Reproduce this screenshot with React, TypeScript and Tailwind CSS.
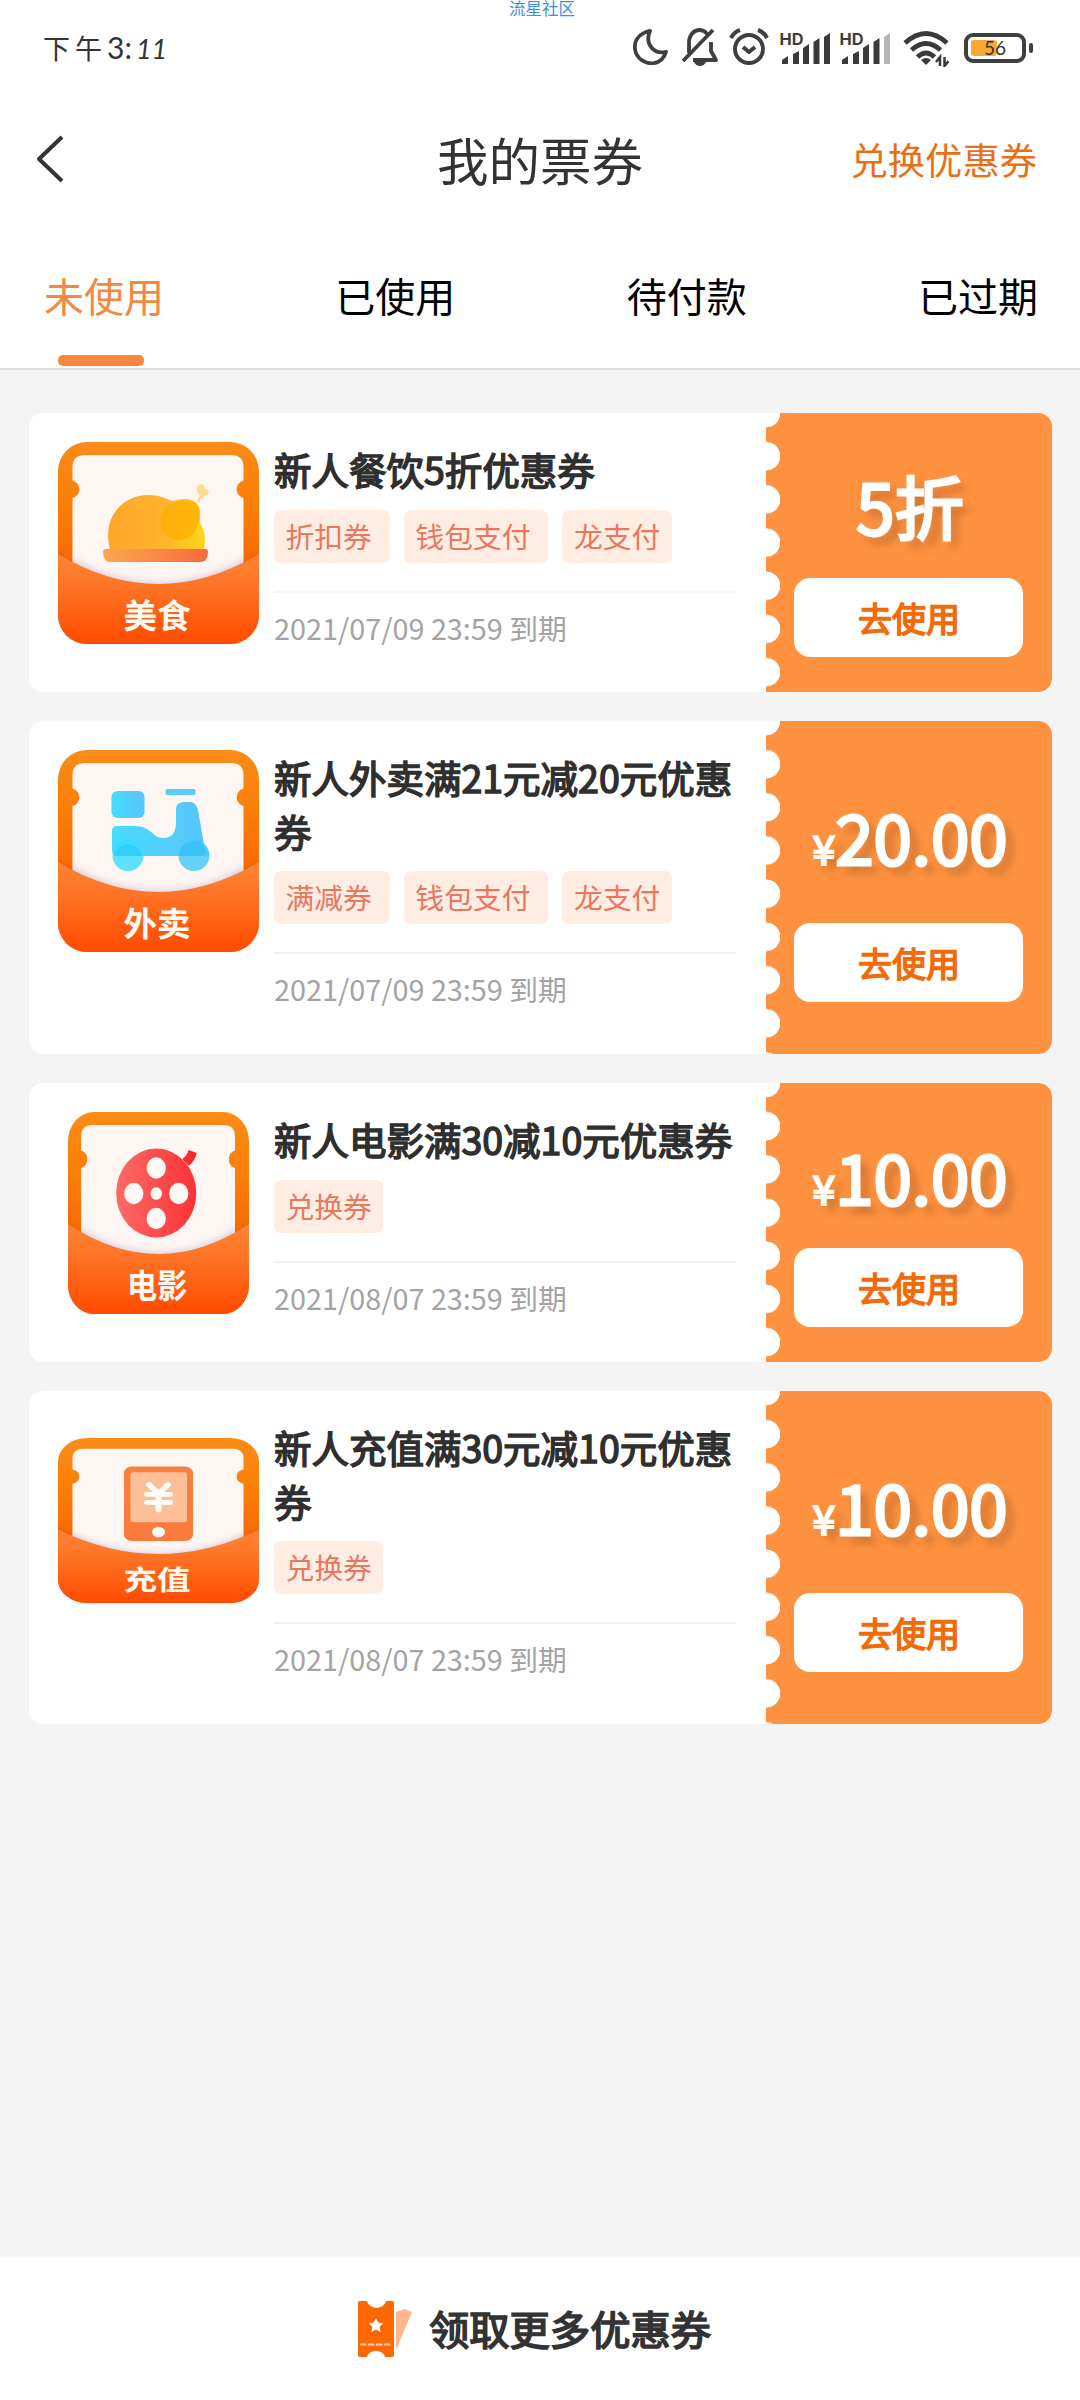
import type { ReactNode } from 'react';
import clsx from 'clsx';

type Category = 'food' | 'delivery' | 'movie' | 'topup';

interface Coupon {
  id: number;
  category: Category;
  label: string;
  title: string;
  tags: string[];
  expires: string;
  amount: string;
  currency?: boolean;
  tall?: boolean;
}

const tabs = ['未使用', '已使用', '待付款', '已过期'];

const coupons: Coupon[] = [
  {
    id: 1,
    category: 'food',
    label: '美食',
    title: '新人餐饮5折优惠券',
    tags: ['折扣券 ', '钱包支付 ', '龙支付'],
    expires: '2021/07/09 23:59 到期',
    amount: '5折',
  },
  {
    id: 2,
    category: 'delivery',
    label: '外卖',
    title: '新人外卖满21元减20元优惠券',
    tags: ['满减券 ', '钱包支付 ', '龙支付'],
    expires: '2021/07/09 23:59 到期',
    amount: '20.00',
    currency: true,
    tall: true,
  },
  {
    id: 3,
    category: 'movie',
    label: '电影',
    title: '新人电影满30减10元优惠券',
    tags: ['兑换券'],
    expires: '2021/08/07 23:59 到期',
    amount: '10.00',
    currency: true,
  },
  {
    id: 4,
    category: 'topup',
    label: '充值',
    title: '新人充值满30元减10元优惠券',
    tags: ['兑换券'],
    expires: '2021/08/07 23:59 到期',
    amount: '10.00',
    currency: true,
    tall: true,
  },
];

const glyphs: Record<Category, ReactNode> = {
  food: (
    <>
      <path d="M139 59l3-6c-4-3-5-8-1-10s6 1 6 4c4 0 5 4 2 6s-4 1-5 2l-3 6z" fill="#ffdc8c" />
      <path d="M52 107C44 78 62 53 91 53c10 0 17 4 24 6 9-3 20-3 25 4 3 5 1 12 2 18 5 8 6 16 4 26z" fill="url(#chicken)" />
      <path d="M121 98c-24 0-25-34-3-38 9-3 19-2 23 5 3 12-2 33-20 33z" fill="#ffae00" fillOpacity=".75" />
      <path d="M48 107h99q3 0 3 3 0 10-8 10H53q-8 0-8-10 0-3 3-3z" fill="url(#plate)" />
    </>
  ),
  delivery: (
    <>
      <rect x="53.500" y="41" width="33" height="27" rx="6" fill="url(#scooter)" />
      <rect x="107.500" y="39" width="30" height="6" rx="1.5" fill="#58cdfb" />
      <path d="M54 81q0-5 5-5h17c18 0 18 12 29 12 9 0 13-6 13-15V60q0-8 8-8h6q6 0 8 8l7 40q1 6-5 6H60q-6 0-6-6z" fill="url(#scooter)" />
      <circle cx="70" cy="105.500" r="15.500" fill="#35dcff" fillOpacity=".8" />
      <circle cx="136" cy="105.500" r="15.500" fill="#3fc8fa" fillOpacity=".8" />
      <path d="M55.500 106a15 15 0 0 1 29 0zM121 106a15 15 0 0 1 30 0z" fill="#28b4f5" fillOpacity=".35" />
    </>
  ),
  movie: (
    <>
      <path d="M127 47q5-3 7-9l9 3q-2 8-9 13z" fill="#f42c32" />
      <circle cx="98" cy="81" r="44.500" fill="url(#reel)" />
      <g fill="#fff9f6">
        <circle cx="98" cy="56" r="10.700" />
        <circle cx="98" cy="106.500" r="10.700" />
        <circle cx="73" cy="81.500" r="10.700" />
        <circle cx="123" cy="81.500" r="10.700" />
        <circle cx="98" cy="81.500" r="6.300" />
      </g>
    </>
  ),
  topup: (
    <>
      <rect x="66" y="35" width="69" height="91" rx="8" fill="url(#phone)" />
      <rect x="72.500" y="42" width="56.500" height="61" rx="3" fill="#fdbf9a" />
      <path d="M91 57l9.500 11 9.500-11M100.500 68v20M89 69h23M89 79h23" fill="none" stroke="#fffaf5" strokeWidth="6" strokeLinecap="round" />
      <circle cx="100.500" cy="115" r="6.500" fill="#fffaf5" />
    </>
  ),
};

function Gradients() {
  return (
    <svg className="absolute h-0 w-0" aria-hidden="true">
      <defs>
        <linearGradient id="frame" x1="0" y1="0" x2="0" y2="1">
          <stop offset="0" stopColor="#fa8c18" />
          <stop offset=".3" stopColor="#fb7e08" />
          <stop offset=".6" stopColor="#fc6a00" />
        </linearGradient>
        <linearGradient id="pocket" x1="0" y1="0" x2="0" y2="1">
          <stop offset="0" stopColor="#ff8436" />
          <stop offset=".35" stopColor="#ff7426" />
          <stop offset="1" stopColor="#ff4b00" />
        </linearGradient>
        <linearGradient id="chicken" x1="0" y1="0" x2="1" y2="0">
          <stop offset="0" stopColor="#ffa52c" />
          <stop offset=".6" stopColor="#ffb52e" />
          <stop offset="1" stopColor="#ffd51a" />
        </linearGradient>
        <linearGradient id="plate" x1="0" y1="0" x2="1" y2="0">
          <stop offset="0" stopColor="#f9a851" />
          <stop offset="1" stopColor="#f76b3c" />
        </linearGradient>
        <linearGradient id="scooter" x1="0" y1="0" x2="1" y2="0">
          <stop offset="0" stopColor="#46dcfe" />
          <stop offset="1" stopColor="#5ac4fb" />
        </linearGradient>
        <linearGradient id="reel" x1="0" y1="0" x2="1" y2="0">
          <stop offset="0" stopColor="#fd6a66" />
          <stop offset="1" stopColor="#fa3238" />
        </linearGradient>
        <linearGradient id="phone" x1="0" y1="0" x2="0" y2="1">
          <stop offset="0" stopColor="#f5813f" />
          <stop offset="1" stopColor="#fa7a3c" />
        </linearGradient>
        <clipPath id="paper">
          <path d="M14.500 25Q14.500 13 27 13H173Q185.500 13 185.500 25V38.500A9 9 0 0 0 185.500 56V145H14.500V56A9 9 0 0 0 14.500 38.500Z" />
        </clipPath>
        <clipPath id="badge">
          <rect width="201" height="202" rx="29" />
        </clipPath>
        <filter id="soft" x="-20%" y="-50%" width="140%" height="200%">
          <feGaussianBlur stdDeviation="4" />
        </filter>
      </defs>
    </svg>
  );
}

function CategoryBadge({ category, label }: { category: Category; label: string }) {
  return (
    <div className="flex h-[202px] w-[201px] shrink-0 items-center justify-center">
      <svg
        viewBox="0 0 201 202"
        preserveAspectRatio="none"
        className={clsx(
          category === 'movie' ? 'w-[181px]' : 'w-[201px]',
          category === 'topup' ? 'mb-px h-[165px]' : 'h-[202px]',
        )}
      >
        <g clipPath="url(#badge)">
          <rect width="201" height="202" fill="url(#frame)" />
          <path d="M-10 108Q100.500 174 211 108V150H-10Z" fill="#c84400" fillOpacity=".5" filter="url(#soft)" />
          <g clipPath="url(#paper)">
            <rect width="201" height="202" fill="#fef6f2" />
            <path d="M0 110Q100.500 174 201 110V160H0Z" fill="#a99bc4" fillOpacity=".6" filter="url(#soft)" />
          </g>
          {glyphs[category]}
          <path d="M0 112Q100.500 172 201 112V202H0Z" fill="url(#pocket)" />
        </g>
        <text x="99" y="186" textAnchor="middle" fontSize="33.500" fontWeight="700" fill="#fffaf2">
          {label}
        </text>
      </svg>
    </div>
  );
}

function CouponCard({ coupon }: { coupon: Coupon }) {
  return (
    <article className={clsx('flex overflow-hidden rounded-[14px] bg-white', coupon.tall ? 'h-[333px]' : 'h-[279px]')}>
      <div className="flex w-[737px] pt-[29px] pl-[29px]">
        <CategoryBadge category={coupon.category} label={coupon.label} />
        <div className="ml-[15px] w-[462px]">
          <h2 className="text-[37.500px] leading-[53.600px] break-all text-[#2f2f2f] [-webkit-text-stroke:1.5px_#2f2f2f]">
            {coupon.title}
          </h2>
          <div className="mt-[14px] flex gap-[14px]">
            {coupon.tags.map((tag) => (
              <span
                key={tag}
                className="h-[53px] rounded-[7px] bg-[#ffede3] px-[11.500px] text-[28.800px] leading-[52px] whitespace-pre text-[#e9775f]"
              >
                {tag}
              </span>
            ))}
          </div>
          <p className="mt-7 border-t-2 border-[#f2f2f2] pt-[14px] text-[28.800px] leading-[42px] text-[#a3a3a3]">
            {coupon.expires}
          </p>
        </div>
      </div>

      <div
        className={clsx(
          'flex flex-1 flex-col items-center bg-[#ff9240] bg-[radial-gradient(circle_at_0_50%,white_14px,transparent_14.5px)] bg-[length:15px_43.2px] bg-[position:0_-21.6px] bg-repeat-y',
          coupon.tall ? 'pt-[27px] pb-[52px]' : 'pt-[19px] pb-[35px]',
        )}
      >
        <div className="flex flex-1 items-center pl-[2px] text-[69px] leading-none whitespace-nowrap text-white [-webkit-text-stroke:3px_white] [text-shadow:8px_8px_8px_rgba(110,60,20,0.4)]">
          <span>
            {coupon.currency && <span className="text-[41px] [-webkit-text-stroke:2px_white]">¥</span>}
            {coupon.amount}
          </span>
        </div>
        <button className="mr-[2px] h-[79px] w-[229px] rounded-2xl bg-white pl-[2px] text-[34px] text-[#f26a0a] [-webkit-text-stroke:1.5px_#f26a0a]">
          去使用
        </button>
      </div>
    </article>
  );
}

function Signal({ weak }: { weak?: boolean }) {
  return (
    <svg viewBox="0 0 50 34" className="h-[34px] w-[50px] overflow-visible">
      <text x="-0.500" y="12.500" fontSize="16" fontWeight="700" fill="#3c3c3c" className="font-['Inter',sans-serif]" textLength="24" lengthAdjust="spacingAndGlyphs">
        HD
      </text>
      <g fill="#3a3a3a">
        <path d="M2 32v-4l6-4v8zM13 32V22l6-3v13zM23 32V16l6-4v20zM33.500 32V10l6-4v26z" />
        <path d="M44 32V5l6-4v31z" fill={weak ? '#b5b5b5' : '#3a3a3a'} />
      </g>
    </svg>
  );
}

function StatusBar() {
  return (
    <div className="relative flex h-[97px] items-start justify-between pt-[27px] pr-[47px] pl-[43px]">
      <span className="absolute top-0 left-[509px] text-[16.500px] leading-[17px] text-[#3a8ee0]">流星社区</span>
      <div className="flex items-baseline text-[27px] leading-[40px] text-[#333]">
        <span className="tracking-[5px]">下午</span>
        <span className="font-['Lato',sans-serif] text-[30px]">3:</span>
        <span className="ml-1 font-['Lato',sans-serif] text-[27px] italic">11</span>
      </div>
      <div className="flex items-start">
        <svg viewBox="0 0 36 40" className="mt-px h-[38px] w-9" preserveAspectRatio="none" fill="none" stroke="#3f3f3f" strokeWidth="3.800" strokeLinejoin="round">
          <path d="M18 3C7 6 2 13 3 22c1 10 10 16 19 15 6-1 10-5 12-12C23 28 12 18 18 3z" />
        </svg>
        <svg viewBox="0 0 38 42" className="ml-[13px] h-[42px] w-[38px]" fill="none" stroke="#3f3f3f" strokeWidth="3.800" strokeLinejoin="round">
          <path d="M2 34L32 3M8 26V16C8 7 14 3 18 3c3 0 6 1 8 4M30 15v9l5 9H12" />
          <path d="M13 35h12q-2 4-6 4t-6-4z" fill="#3f3f3f" stroke="none" />
        </svg>
        <svg viewBox="0 0 40 40" className="ml-[10px] h-10 w-10" fill="none" stroke="#3f3f3f" strokeWidth="4">
          <circle cx="20" cy="22" r="14" />
          <path d="M14 20l6 5 6-5M2 11Q5 5 11 3M38 11Q35 5 29 3" strokeLinejoin="round" />
        </svg>
        <div className="mt-[5px] ml-[11px] flex gap-[10px]">
          <Signal />
          <Signal weak />
        </div>
        <svg viewBox="0 0 46 37" className="mt-[3px] ml-[13px] h-[37px] w-[46px]" fill="none" stroke="#3a3a3a" strokeWidth="4.800">
          <path d="M2 13Q23-6 44 13M8.500 20Q23 7 37.500 20M14.500 27Q23 19 31.500 27" />
          <path d="M18 30q5-4 10 0l-5 5z" fill="#3a3a3a" stroke="none" />
          <path d="M37 36v-9l-4 5M41.500 27v9l4-5" strokeWidth="2.500" />
        </svg>
        <div className="mt-[6px] ml-[15px] flex items-center">
          <div className="relative h-[30px] w-[62px] rounded-[9px] border-[4px] border-[#3f3f3f] p-[3px]">
            <div className="h-4 w-[26px] rounded-[3px] bg-[#f3ab35]" />
            <span className="absolute inset-0 text-center font-['Lato',sans-serif] text-[19px] leading-[22px] text-[#333]">56</span>
          </div>
          <div className="ml-[3px] h-[10px] w-1 rounded-sm bg-[#3f3f3f]" />
        </div>
      </div>
    </div>
  );
}

function TicketIcon() {
  return (
    <svg viewBox="0 0 54 58" className="h-[58px] w-[54px]">
      <path d="M38 12l9-3 7 3-16 38z" fill="#ffb68c" />
      <path d="M0 3q0-2 2-2h7c2 9 17 9 19 0h6q2 0 2 2v52q0 2-2 2h-7c-2-8-16-8-18 0H2q-2 0-2-2z" fill="#fd6803" />
      <path d="M18 18l2.300 4.600 5 .7-3.600 3.500.9 5.200-4.600-2.500-4.600 2.500.9-5.200-3.600-3.500 5-.7z" fill="#fff" />
      <path d="M2 44.500h31" stroke="#ffcfae" strokeWidth="2.200" strokeDasharray="6.500 1.500" />
    </svg>
  );
}

export default function App() {
  return (
    <div className="flex h-[2400px] w-[1080px] flex-col overflow-hidden bg-[#f4f4f4] font-['Noto_Sans_CJK_SC',sans-serif]">
      <Gradients />
      <header className="border-b-2 border-[#dedede] bg-white">
        <StatusBar />
        <div className="grid h-[124px] grid-cols-3 items-center px-[43px]">
          <svg viewBox="0 0 28 48" className="-ml-[7px] h-12 w-7" fill="none" stroke="#333" strokeWidth="4" strokeLinejoin="round">
            <path d="M26 2L3 24l23 22" />
          </svg>
          <h1 className="text-center text-[51.500px] leading-none text-[#333]">我的票券</h1>
          <span className="pt-px text-right text-[37.300px] leading-none text-[#e96f14]">兑换优惠券</span>
        </div>
        <nav className="flex h-[147px] justify-between pr-[42px] pl-[44px]">
          {tabs.map((tab, i) => (
            <div key={tab} className="flex flex-col items-center">
              <span className={clsx('mt-[44px] text-[40px] leading-[60px]', i === 0 ? 'text-[#f5873e]' : 'text-black')}>
                {tab}
              </span>
              {i === 0 && <span className="mt-[30px] mr-[6px] h-[11px] w-[86px] rounded-[5px] bg-[#f5873e]" />}
            </div>
          ))}
        </nav>
      </header>

      <main className="flex flex-1 flex-col gap-[29px] pt-[43px] pr-[28px] pl-[29px]">
        {coupons.map((coupon) => (
          <CouponCard key={coupon.id} coupon={coupon} />
        ))}
      </main>

      <footer className="flex h-[143px] items-center justify-center gap-[17px] bg-white pr-[11px]">
        <TicketIcon />
        <span className="text-[40.300px] leading-none text-[#333] [-webkit-text-stroke:1.7px_#333]">领取更多优惠券</span>
      </footer>
    </div>
  );
}
